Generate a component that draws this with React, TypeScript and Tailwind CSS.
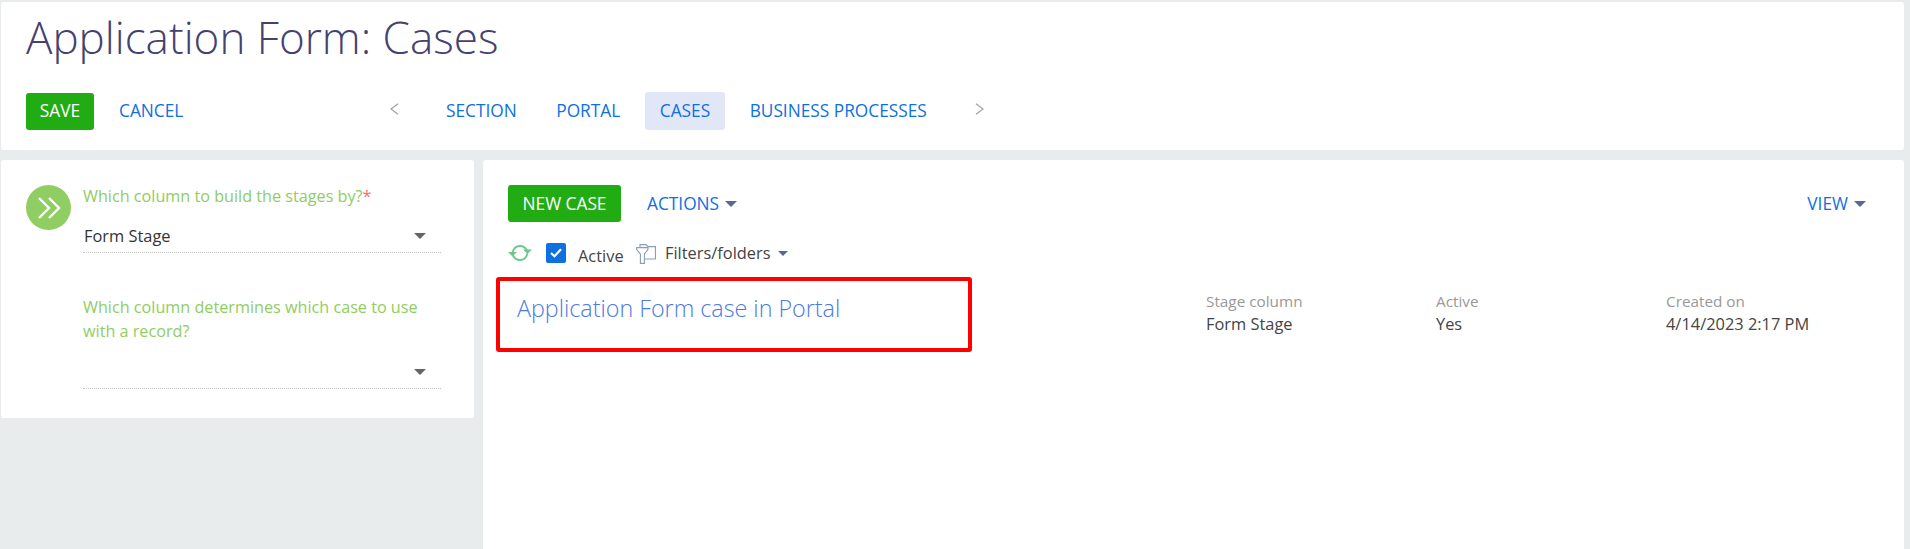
const Caret = ({ size = 'border-x-[6px] border-t-[6px]', color = 'border-t-[#56698f]' }: { size?: string; color?: string }) => (
  <span className={`inline-block w-0 h-0 border-x-transparent ${size} ${color}`} />
);

const Chevron = ({ right = false }: { right?: boolean }) => (
  <svg width="9" height="12" viewBox="0 0 9 12" fill="none" stroke="#a3a3a3" strokeWidth="1.3">
    <path d={right ? 'M1 0.7 L8 6 L1 11.3' : 'M8 0.7 L1 6 L8 11.3'} />
  </svg>
);

const tabs = ['SECTION', 'PORTAL', 'CASES', 'BUSINESS PROCESSES'];

const Header = () => (
  <div className="h-[148px] bg-white rounded-[3px] ml-px mr-[6px] pl-[25px] shrink-0">
    <h1 className="pt-[10px] h-[90px] text-[44px] leading-[50px] font-light text-[#444270]">Application Form: Cases</h1>
    <div className="flex items-center h-[38px]">
      <button className="w-[68px] h-[37px] bg-[#22ac14] text-white text-[17.3px] font-medium rounded-[3px]">SAVE</button>
      <button className="ml-[25px] w-[65px] text-left text-[17.3px] text-[#0d6fe0]">CANCEL</button>
      <div className="ml-[206px] w-[10px] -mt-[5px] flex"><Chevron /></div>
      <div className="ml-[31px] flex items-center gap-[9.5px] text-[17.3px] text-[#0d6fe0]">
        {tabs.map((t) => (
          <span key={t} className={`h-[38px] px-[15px] leading-[38px] rounded-[3px] ${t === 'CASES' ? 'bg-[#e2e7f8]' : ''}`}>{t}</span>
        ))}
      </div>
      <div className="ml-[33px] w-[10px] -mt-[5px] flex"><Chevron right /></div>
    </div>
  </div>
);

const LookupField = ({ value, h }: { value?: string; h: string }) => (
  <div className={`flex items-end border-b border-dotted border-[#c4c4c4] pl-px pr-[15px] pb-[4px] text-[16.4px] text-[#333] ${h}`}>
    <div className="flex items-center justify-between w-full h-[24px]">
      <span>{value}</span>
      <Caret color="border-t-[#666]" />
    </div>
  </div>
);

const LeftPanel = () => (
  <div className="w-[473px] h-[258px] ml-px bg-white rounded-[3px] pl-[25px] pt-[25px] pr-[33px] flex shrink-0">
    <div className="w-[45px] h-[45px] rounded-full bg-[#90cd62] flex items-center justify-center shrink-0">
      <svg width="24" height="24" viewBox="0 0 24 24" fill="none" stroke="#fff" strokeWidth="2.4">
        <path d="M2 2 L12 12 L2 22 M12 2 L22 12 L12 22" />
      </svg>
    </div>
    <div className="ml-[12px] flex-1 -mt-[1px]">
      <div className="text-[16.2px] leading-[24px] text-[#90cd62]">Which column to build the stages by?<span className="text-[#ff6b6b]">*</span></div>
      <LookupField value="Form Stage" h="h-[45px]" />
      <div className="mt-[42px] text-[16.2px] leading-[24px] text-[#90cd62]">Which column determines which case to use with a record?</div>
      <LookupField h="h-[46px]" />
    </div>
  </div>
);

const RefreshIcon = () => (
  <svg width="24" height="16" viewBox="0 0 24 16" fill="none" stroke="#6cc788" strokeWidth="1.8">
    <path d="M4.5 7.5 C5.5 3.5 8.5 1 12 1 C15 1 17.5 2.6 19 5.5" />
    <path d="M19.5 8.5 C18.5 12.5 15.5 15 12 15 C9 15 6.5 13.4 5 10.5" />
    <path d="M0 7 H9 L4.5 11.5 Z" fill="#6cc788" stroke="none" />
    <path d="M15 4.5 H24 L19.5 9 Z" fill="#6cc788" stroke="none" />
  </svg>
);

const FilterFolderIcon = () => (
  <svg width="20" height="20" viewBox="0 0 20 20" fill="none" stroke="#8a9cb8" strokeWidth="1.1">
    <path d="M4 3 V0.6 H10 L12 2.6 H19.4 V15 H9" />
    <path d="M0.6 3.6 H12 V5.5 L8.4 10 V19.4 H4.4 V10 L0.6 5.5 Z" fill="#fff" />
  </svg>
);

const cols = [
  { label: 'Stage column', value: 'Form Stage' },
  { label: 'Active', value: 'Yes' },
  { label: 'Created on', value: '4/14/2023 2:17 PM' },
];

const RightPanel = () => (
  <div className="flex-1 h-[389px] bg-white rounded-t-[3px] mr-[6px] pl-[25px] pr-[38px] pt-[25px] min-w-0">
    <div className="flex items-center h-[37px]">
      <button className="w-[113px] h-[37px] bg-[#22ac14] text-white text-[17.3px] font-medium rounded-[3px]">NEW CASE</button>
      <span className="ml-[26px] text-[17.3px] text-[#0d6fe0]">ACTIONS</span>
      <span className="ml-[6px] flex"><Caret /></span>
      <span className="ml-auto text-[17.3px] text-[#0d6fe0]">VIEW</span>
      <span className="ml-[6px] flex"><Caret /></span>
    </div>
    <div className="flex items-center h-[24px] mt-[19px] text-[16.4px] text-[#444]">
      <RefreshIcon />
      <span className="ml-[14px] w-[20px] h-[20px] rounded-[2px] bg-[#0d6fe0] flex items-center justify-center">
        <svg width="12" height="10" viewBox="0 0 12 10" fill="none" stroke="#fff" strokeWidth="2.2"><path d="M1 5 L4.5 8.2 L11 1.2" /></svg>
      </span>
      <span className="ml-[12px] mt-[6px] w-[44px]">Active</span>
      <span className="ml-[14px] mt-[2px] flex"><FilterFolderIcon /></span>
      <span className="ml-[9px]">Filters/folders</span>
      <span className="ml-[7px] flex"><Caret size="border-x-[5px] border-t-[5px]" /></span>
    </div>
    <div className="flex -ml-[12px] mt-[12px]">
      <div className="w-[476px] h-[75px] border-[4px] border-[#ff0000] rounded-[3px] pl-[17px] pt-[9px] text-[23.3px] leading-[36px] font-light text-[#4b7be0] shrink-0">
        Application Form case in Portal
      </div>
      <div className="flex ml-[234px] mt-[13px]">
        {cols.map((c) => (
          <div key={c.label} className="w-[230px]">
            <div className="text-[15.3px] leading-[22px] text-[#999]">{c.label}</div>
            <div className="text-[16.4px] leading-[24px] text-[#444]">{c.value}</div>
          </div>
        ))}
      </div>
    </div>
  </div>
);

export default function App() {
  return (
    <div className="w-[1910px] h-[549px] overflow-hidden bg-[#e9ecec] pt-[2px] flex flex-col gap-[10px]" style={{ fontFamily: '"Open Sans", sans-serif' }}>
      <Header />
      <div className="flex gap-[9px] items-start">
        <LeftPanel />
        <RightPanel />
      </div>
    </div>
  );
}
